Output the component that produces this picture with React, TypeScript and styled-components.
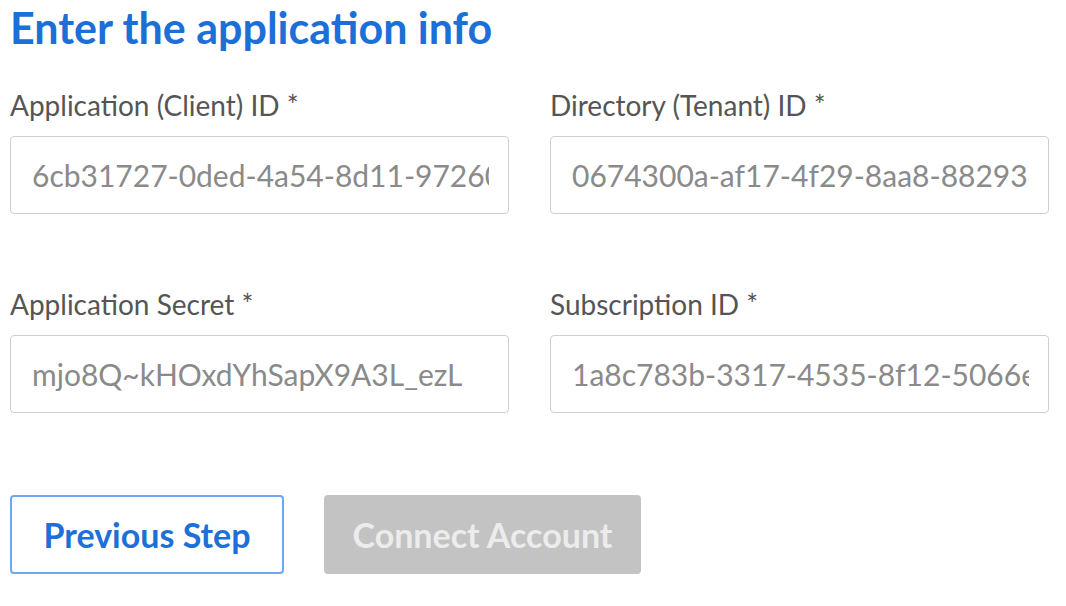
import React from "react";
import styled, { createGlobalStyle } from "styled-components";

const Global = createGlobalStyle`
  html, body { margin: 0; padding: 0; background: #ffffff; }
  body { font-family: Lato, "Open Sans", sans-serif; }
`;

const Page = styled.div`
  padding: 3px 17px 0 10px;
  display: flex;
  flex-direction: column;
`;

const Title = styled.h1`
  margin: 0;
  font-size: 43px;
  line-height: 50px;
  font-weight: 700;
  color: #1b6fd6;
`;

const Grid = styled.div`
  margin-top: 35px;
  display: grid;
  grid-template-columns: 499px 499px;
  column-gap: 41px;
  row-gap: 73px;
`;

const Field = styled.div`
  display: flex;
  flex-direction: column;
  gap: 14px;
`;

const Label = styled.label`
  font-size: 28px;
  line-height: 34px;
  color: #555555;
`;

const Input = styled.input`
  border: 1px solid #cfcfcf;
  border-radius: 4px;
  box-sizing: border-box;
  width: 100%;
  height: 78px;
  margin: 0;
  padding: 0 19px 0 21px;
  background: #ffffff;
  outline: none;
  font-family: inherit;
  font-size: 30px;
  color: #8a8a8a;
`;

const Actions = styled.div`
  margin-top: 82px;
  display: flex;
  gap: 40px;
`;

const Button = styled.button<{ $variant: "outline" | "disabled" }>`
  height: 79px;
  box-sizing: border-box;
  border-radius: 4px;
  font-family: inherit;
  font-size: 34px;
  font-weight: 700;
  padding: 0;
  ${(p) =>
    p.$variant === "outline"
      ? `width: 274px; background: #fff; border: 2px solid #6ea6f0; color: #1d70d8;`
      : `width: 317px; background: #c3c3c3; border: none; color: #ececec;`}
`;

const fields = [
  { label: "Application (Client) ID *", value: "6cb31727-0ded-4a54-8d11-97260c3f1b2a" },
  { label: "Directory (Tenant) ID *", value: "0674300a-af17-4f29-8aa8-88293c1d2e4f" },
  { label: "Application Secret *", value: "mjo8Q~kHOxdYhSapX9A3L_ezL" },
  { label: "Subscription ID *", value: "1a8c783b-3317-4535-8f12-5066e2a7b9c1" },
];

export default function App() {
  return (
    <>
      <Global />
      <Page>
        <Title>Enter the application info</Title>
        <Grid>
          {fields.map((f) => (
            <Field key={f.label}>
              <Label>{f.label}</Label>
              <Input readOnly value={f.value} />
            </Field>
          ))}
        </Grid>
        <Actions>
          <Button $variant="outline">Previous Step</Button>
          <Button $variant="disabled">Connect Account</Button>
        </Actions>
      </Page>
    </>
  );
}
